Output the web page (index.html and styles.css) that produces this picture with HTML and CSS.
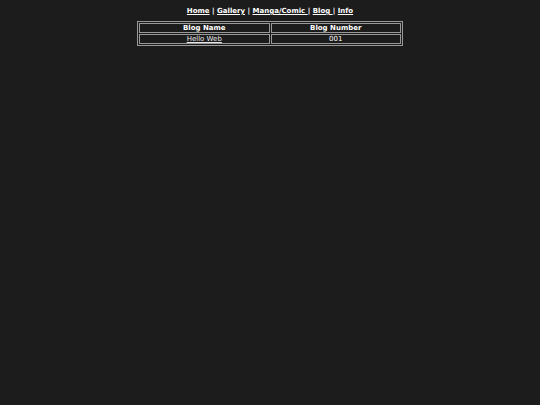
FILE: index.html
```html
<!DOCTYPE html>
<html>
<head>
<meta charset="utf-8">
<link rel="stylesheet" href="styles.css">
</head>
<body>
<nav class="nav"><a href="#">Home</a> | <a href="#">Gallery</a> | <a href="#">Manga/Comic </a> | <a href="#">Blog </a> | <a href="#">Info</a></nav>
<table class="blogs">
<tr><th>Blog Name</th><th>Blog Number</th></tr>
<tr><td><a href="#">Hello Web</a></td><td>001</td></tr>
</table>
</body>
</html>
```
FILE: styles.css
```css
html, body { background: #1c1c1c; }
body { margin: 0; color: #ffffff; font-family: "DejaVu Sans", Verdana, sans-serif; font-size: 7px; }
.nav { text-align: center; font-weight: bold; padding-top: 7px; height: 14px; line-height: 8px; }
.nav a { color: #ffffff; }
.blogs { margin: 0 auto; width: 266px; border: 1px solid #999999; border-spacing: 1px; }
.blogs th, .blogs td { border: 1px solid #999999; text-align: center; padding: 0; height: 8px; line-height: 8px; width: 50%; }
.blogs a { color: #e8e8e8; }
```
